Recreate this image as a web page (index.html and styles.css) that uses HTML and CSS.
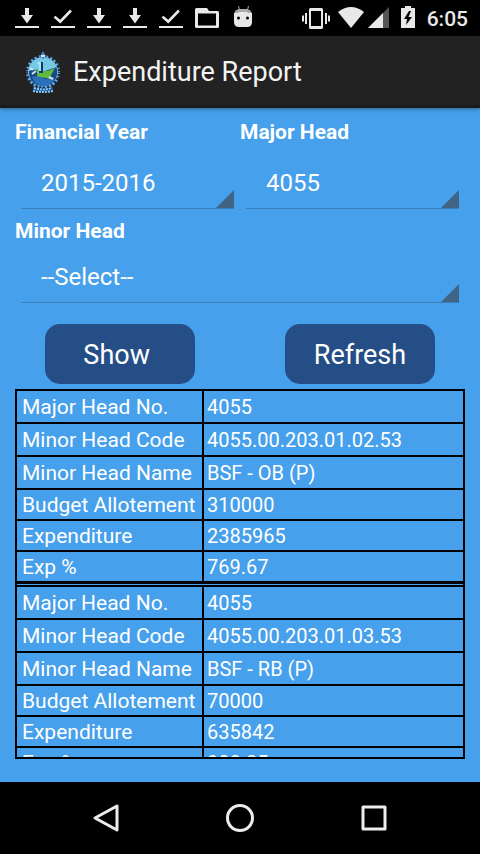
FILE: index.html
```html
<!DOCTYPE html>
<html lang="en">
<head>
<meta charset="utf-8">
<meta name="viewport" content="width=device-width, initial-scale=1">
<title>Expenditure Report</title>
<link rel="stylesheet" href="styles.css">
</head>
<body>
<svg class="defs" aria-hidden="true">
  <symbol id="download" viewBox="0 0 24 24"><path d="M10 2h4v7h4l-6 8.500-6-8.500h4zM0 20h24v2H0z"/></symbol>
  <symbol id="done" viewBox="0 0 24 24"><path d="M4.300 9.700 2.600 11.500 9.300 17.400 20.900 5.400 19 3.600 9.200 13.800zM0 20h24v2H0z"/></symbol>
</svg>
<div class="screen">
  <div class="status">
    <div class="notifications">
      <svg class="icon"><use href="#download"/></svg>
      <svg class="icon"><use href="#done"/></svg>
      <svg class="icon"><use href="#download"/></svg>
      <svg class="icon"><use href="#download"/></svg>
      <svg class="icon"><use href="#done"/></svg>
      <svg class="icon" viewBox="0 0 24 24"><path fill-rule="evenodd" d="M1.500 2H12l2 3h8.500Q24 5 24 6.500v14q0 1.500-1.500 1.500h-21Q0 22 0 20.500v-17Q0 2 1.500 2zM3 7.500V19.500H21V7.500z"/></svg>
      <svg class="icon" viewBox="0 0 24 24"><path d="M7.500 0 8.500 4M17.500 0 16.500 4" stroke="#aaa" stroke-width="1"/><path class="dim" d="M3 8Q3.500 4 8 3h8q4.500 1 5 5z"/><path d="M3 7h4l1-1h8l1 1h4v9q0 5-5 5H8q-5 0-5-5z"/><circle cx="7.500" cy="12" r="1.500" fill="#000"/><circle cx="16.500" cy="12" r="1.500" fill="#000"/></svg>
    </div>
    <div class="system">
      <svg width="28" height="24" viewBox="0 0 28 24"><path fill-rule="evenodd" d="M8.500 2h11q1.500 0 1.500 1.500v18q0 1.500-1.500 1.500h-11Q7 23 7 21.500v-18Q7 2 8.500 2zM9 5v15h10V5zM3 7h2v11H3zM0 9.500h2v6H0zM23 7h2v11h-2zM26 9.500h2v6h-2z"/></svg>
      <svg width="26" height="24" viewBox="0 0 26 24"><path d="M0 6Q13-4 26 6L13 22z"/></svg>
      <svg width="21" height="24" viewBox="0 0 21 24"><path d="M21 1v21H0z" fill="#555"/><path d="M15 7v15H0z"/></svg>
      <svg class="battery" width="14" height="24" viewBox="0 0 14 24"><path d="M0 2h4V0h6v2h4v20H0z"/><path d="M8 5 3 13h3l-1 6 6-8H7.500l2.500-6z" fill="#000"/></svg>
      <span class="time">6:05</span>
    </div>
  </div>

  <header class="appbar">
    <svg class="emblem" viewBox="0 0 36 42" role="img" aria-label="Emblem">
      <circle cx="18" cy="21" r="15" fill="#76c9e4"/>
      <path d="M4 20q7-3 13 1l15-5q2 12-5 18-9 5-17 0-7-6-6-14z" fill="#164a87"/>
      <path d="M12 18q6 5 18-1l-6 11q-6-3-12 0z" fill="#62b93c"/>
      <path d="M7 26q6-2 11 1t12-1q-3 9-12 10-8-2-11-10z" fill="#2a70b8"/>
      <path d="M12 11h5v11h-4q3-5-1-11z" fill="#a9e4f5"/>
      <path d="M18 11v11h-4v-2h2v-9z" fill="#103566"/>
      <circle cx="18" cy="21" r="15.500" fill="none" stroke="#6aaee4" stroke-width="3" stroke-dasharray="2 2"/>
      <circle cx="18" cy="21" r="16" fill="none" stroke="#123e70" stroke-width="2" stroke-dasharray="1 4"/>
      <path d="M15 5 18 0l3 5-3 3z" fill="#4384be"/>
      <path d="M16 5h4M5 17l3 2M7 23l4-3M24 26l4 2" stroke="#d5e4ee" stroke-width="2"/>
      <path d="M8 36q10 3 20 0v4q-10 2-20 0z" fill="#17528f"/>
      <path d="M9 37q9 3 18 0M8 40q10 2 20 0" fill="none" stroke="#8bc9f3" stroke-width="2" stroke-dasharray="2 1"/>
    </svg>
    <h1 class="title">Expenditure Report</h1>
  </header>

  <main class="content">
    <form class="filters">
      <div class="field">
        <label for="year">Financial Year</label>
        <div class="spinner"><select id="year"><option>2015-2016</option></select></div>
      </div>
      <div class="field">
        <label for="major">Major Head</label>
        <div class="spinner"><select id="major"><option>4055</option></select></div>
      </div>
      <div class="field wide">
        <label for="minor">Minor Head</label>
        <div class="spinner"><select id="minor"><option>--Select--</option></select></div>
      </div>
    </form>
    <div class="actions">
      <button type="button">Show&nbsp;</button>
      <button type="button">Refresh</button>
    </div>
    <div class="records">
      <table>
        <tbody>
          <tr class="tall"><th scope="row">Major Head No.</th><td>4055</td></tr>
          <tr class="tall"><th scope="row">Minor Head Code</th><td>4055.00.203.01.02.53</td></tr>
          <tr class="tall"><th scope="row">Minor Head Name</th><td>BSF - OB (P)</td></tr>
          <tr><th scope="row">Budget Allotement</th><td>310000</td></tr>
          <tr><th scope="row">Expenditure</th><td>2385965</td></tr>
          <tr><th scope="row">Exp %</th><td>769.67</td></tr>
        </tbody>
      </table>
      <table>
        <tbody>
          <tr class="tall"><th scope="row">Major Head No.</th><td>4055</td></tr>
          <tr class="tall"><th scope="row">Minor Head Code</th><td>4055.00.203.01.03.53</td></tr>
          <tr class="tall"><th scope="row">Minor Head Name</th><td>BSF - RB (P)</td></tr>
          <tr><th scope="row">Budget Allotement</th><td>70000</td></tr>
          <tr><th scope="row">Expenditure</th><td>635842</td></tr>
          <tr><th scope="row">Exp %</th><td>908.35</td></tr>
        </tbody>
      </table>
    </div>
  </main>

  <nav class="navbar">
    <button type="button" aria-label="Back"><svg viewBox="0 0 32 32"><path d="M27 4v24L5 16z"/></svg></button>
    <button type="button" aria-label="Home"><svg viewBox="0 0 32 32"><circle cx="16" cy="16" r="12.500"/></svg></button>
    <button type="button" aria-label="Overview"><svg viewBox="0 0 32 32"><path d="M5 5h22v22H5z"/></svg></button>
  </nav>
</div>
</body>
</html>
```
FILE: styles.css
```css
* {
  box-sizing: border-box;
}

body {
  margin: 0;
  background: #000;
  color: #fff;
  font-family: Roboto, "Liberation Sans", sans-serif;
}

button,
select {
  margin: 0;
  padding: 0;
  border: 0;
  color: inherit;
  font-family: inherit;
}

.defs {
  display: none;
}

.screen {
  display: flex;
  flex-direction: column;
  height: 100vh;
}

.status {
  display: flex;
  justify-content: space-between;
  align-items: center;
  flex: none;
  height: 36px;
  padding: 0 12px 0 15px;
  background: #000;
}

.status svg {
  fill: #e8e8e8;
}

.status .dim {
  fill: #aaa;
}

.notifications {
  display: flex;
  gap: 12px;
}

.icon {
  width: 24px;
  height: 24px;
}

.system {
  display: flex;
  align-items: center;
  gap: 4px;
}

.system svg:first-child {
  margin-right: 4px;
}

.battery {
  margin: 0 8px;
}

.time {
  color: #e8e8e8;
  font-size: 21px;
  font-weight: 500;
  line-height: 24px;
  padding-top: 2px;
}

.appbar {
  position: relative;
  display: flex;
  align-items: center;
  flex: none;
  gap: 12px;
  height: 72px;
  padding: 0 25px;
  background: #222;
  box-shadow: inset 0 -3px #1b1b1b, 0 1px 4px rgba(0, 0, 0, 0.4);
}

.emblem {
  width: 36px;
  height: 42px;
}

.title {
  margin: 0;
  color: #f3f3f3;
  font-size: 27px;
  font-weight: 400;
  line-height: 32px;
}

.content {
  display: flex;
  flex-direction: column;
  flex: 1;
  min-height: 0;
  padding: 10px 0 23px;
  background: #47a0eb;
}

.filters {
  display: grid;
  grid-template-columns: 1fr 1fr;
  row-gap: 8px;
  padding: 0 15px;
}

.field {
  display: flex;
  flex-direction: column;
  gap: 13px;
}

.wide {
  grid-column: 1 / -1;
  gap: 8px;
}

.field label {
  font-size: 21px;
  font-weight: 700;
  line-height: 28px;
}

.spinner {
  position: relative;
  margin: 0 6px;
  border-bottom: 1px solid #3c80bb;
}

.spinner::after {
  content: "";
  position: absolute;
  right: 0;
  bottom: 0;
  width: 18px;
  height: 18px;
  background: #3f6484;
  clip-path: polygon(100% 0, 100% 100%, 0 100%);
  pointer-events: none;
}

.spinner select {
  display: block;
  width: 100%;
  height: 49px;
  padding: 0 20px 2px;
  appearance: none;
  background: transparent;
  font-size: 24px;
}

.actions {
  display: flex;
  justify-content: space-around;
  padding: 21px 0 5px;
}

.actions button {
  width: 150px;
  height: 60px;
  padding-top: 2px;
  border-radius: 15px;
  background: #264e86;
  font-size: 27px;
}

.records {
  flex: 1;
  min-height: 0;
  margin: 0 15px;
  overflow: hidden auto;
  scrollbar-width: none;
  border: solid #000;
  border-width: 0 2px 2px;
}

.records table {
  width: 100%;
  margin-bottom: 1px;
  border-collapse: separate;
  border-spacing: 0;
  border-bottom: 3px solid #000;
  table-layout: fixed;
}

.records tr {
  height: 31px;
}

.records .tall {
  height: 33px;
}

.records th,
.records td {
  padding: 0;
  border-top: 2px solid #000;
  line-height: 28px;
  white-space: nowrap;
}

.records th {
  width: 185px;
  padding-left: 5px;
  font-size: 21px;
  font-weight: 400;
  text-align: left;
}

.records td {
  padding-left: 3px;
  border-left: 2px solid #000;
  font-size: 20px;
}

.navbar {
  display: flex;
  justify-content: center;
  flex: none;
  height: 72px;
  background: #000;
}

.navbar button {
  display: flex;
  align-items: center;
  justify-content: center;
  width: 28%;
  background: transparent;
}

.navbar svg {
  width: 32px;
  height: 32px;
  fill: none;
  stroke: #ececec;
  stroke-width: 3px;
  stroke-linejoin: round;
}
```
